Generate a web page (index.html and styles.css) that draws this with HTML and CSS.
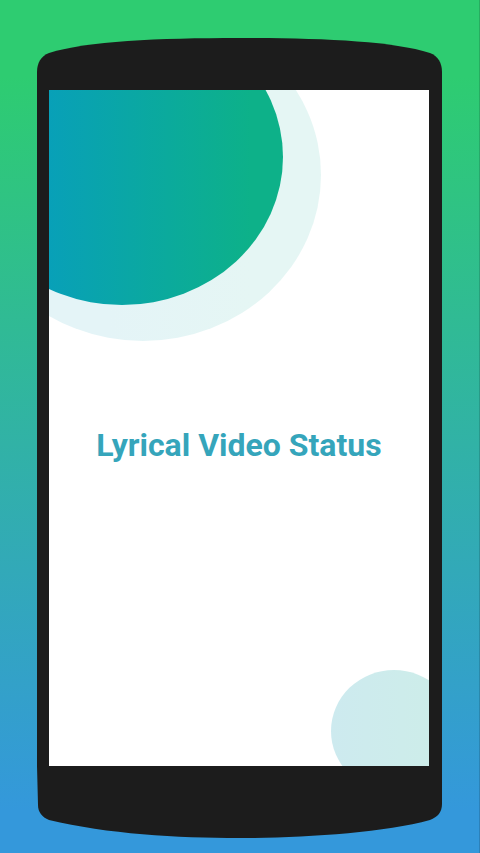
FILE: index.html
```html
<!DOCTYPE html>
<html lang="en">
<head>
    <meta charset="UTF-8">
    <meta name="viewport" content="width=device-width, initial-scale=1.0">
    <title>Lyrical Video Status</title>
    <link rel="stylesheet" href="styles.css">
</head>
<body>
    <div class="phone">
        <!-- Top of the phone -->
        <svg class="phone-cap" viewBox="0 0 404 52" preserveAspectRatio="none" aria-hidden="true">
            <path d="M0 52V34C0 25 4 18 12 15C50 3 120 0 202 0S354 3 392 15C400 18 404 25 404 34V52Z"/>
        </svg>

        <!-- Splash screen -->
        <main class="screen">
            <div class="circle circle-pale"></div>
            <div class="circle circle-main"></div>
            <div class="circle circle-small"></div>
            <h1>Lyrical Video Status</h1>
        </main>

        <!-- Bottom of the phone -->
        <svg class="phone-base" viewBox="0 0 404 72" preserveAspectRatio="none" aria-hidden="true">
            <path d="M0 0L1 39C1 46 5 51 12 54C70 68 140 72 202 72S345 67 392 54C400 51 404 46 404 38V0Z"/>
        </svg>
    </div>
</body>
</html>
```

FILE: styles.css
```css
* {
    box-sizing: border-box;
}
body {
    margin: 0;
    min-height: 100vh;
    display: flex;
    padding: 38px 37px 15px;
    font-family: Roboto, Arial, sans-serif;
    background: linear-gradient(#2ecc71 9%, #3498db 95%);
    border-right: 1px solid rgba(0, 0, 0, 0.15);
}
.phone {
    flex: 1;
    display: flex;
    flex-direction: column;
}
.phone-cap, .phone-base {
    display: block;
    width: 100%;
    fill: #1c1c1c;
}
.phone-cap {
    height: 52px;
}
.phone-base {
    height: 72px;
}
.screen {
    position: relative;
    flex: 1;
    display: flex;
    align-items: center;
    justify-content: center;
    padding-top: 34px;
    overflow: hidden;
    background-color: #fff;
    border: solid #1c1c1c;
    border-width: 0 13px 0 12px;
}
h1 {
    margin: 0;
    font-size: 32px;
    font-weight: 700;
    line-height: 36px;
    text-align: center;
    color: #35a5bb;
}

/* Background circles */
.circle {
    position: absolute;
    border-radius: 50%;
}
.circle-pale {
    top: -81px;
    left: -84px;
    width: 356px;
    height: 332px;
    background: linear-gradient(to right, #e4f4f7 40%, #e5f6f4 80%);
}
.circle-main {
    top: -81px;
    left: -88px;
    width: 322px;
    height: 296px;
    background: linear-gradient(to right, #08a0b8 27%, #0db189 90%);
}
.circle-small {
    right: -28px;
    bottom: -26px;
    width: 126px;
    height: 122px;
    background: linear-gradient(to right, #cdeaef, #cdede9 85%);
}
```
